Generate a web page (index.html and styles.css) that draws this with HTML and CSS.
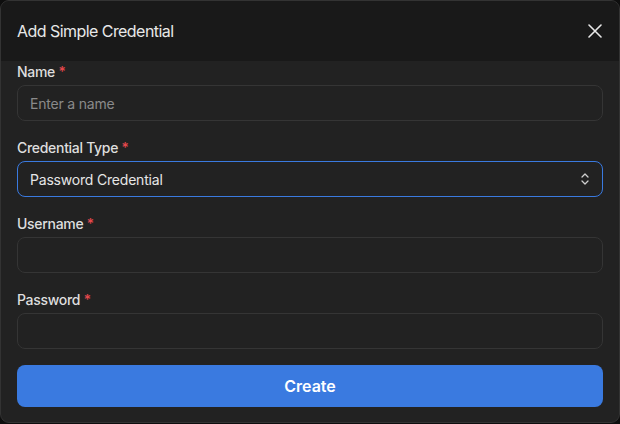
FILE: index.html
```html
<!DOCTYPE html>
<html lang="en">
<head>
  <meta charset="UTF-8">
  <title>Add Simple Credential</title>
  <link rel="stylesheet" href="styles.css">
</head>
<body>
  <div class="dialog">
    <div class="header">
      <h2>Add Simple Credential</h2>
      <button class="close" aria-label="Close">
        <svg width="14" height="14" viewBox="0 0 14 14"><path d="M1 1L13 13M13 1L1 13" stroke="#e8e8e8" stroke-width="1.6" stroke-linecap="round"/></svg>
      </button>
    </div>

    <form class="body">
      <div class="field">
        <label>Name <span class="req">*</span></label>
        <input type="text" placeholder="Enter a name">
      </div>

      <div class="field">
        <label>Credential Type <span class="req">*</span></label>
        <div class="select focused">
          <span>Password Credential</span>
          <svg width="12" height="14" viewBox="0 0 12 14"><path d="M3 5L6 2L9 5M3 9L6 12L9 9" fill="none" stroke="#cfcfcf" stroke-width="1.3" stroke-linecap="round" stroke-linejoin="round"/></svg>
        </div>
      </div>

      <div class="field">
        <label>Username <span class="req">*</span></label>
        <input type="text">
      </div>

      <div class="field">
        <label>Password <span class="req">*</span></label>
        <input type="password">
      </div>

      <button type="button" class="create">Create</button>
    </form>
  </div>
</body>
</html>
```

FILE: styles.css
```css
body {
  margin: 0;
  background: #0e0e0e;
  font-family: Inter, "Noto Sans", sans-serif;
  color: #e6e6e6;
}
.dialog {
  width: 620px;
  height: 423px;
  box-sizing: border-box;
  border: 1px solid #333;
  border-radius: 9px;
  background: #222;
  overflow: hidden;
}
.header {
  height: 60px;
  background: #191919;
  display: flex;
  align-items: center;
  justify-content: space-between;
  padding: 0 16px;
}
.header h2 {
  margin: 0 0 1px;
  font-size: 16px;
  font-weight: 400;
  color: #e8e8e8;
  letter-spacing: -0.55px;
}
.close {
  background: none;
  border: none;
  padding: 0;
  width: 20px;
  height: 20px;
  display: flex;
  align-items: center;
  justify-content: center;
  margin-right: -2px;
  cursor: pointer;
}
.body {
  padding: 1px 16px 0;
  display: flex;
  flex-direction: column;
}
.field {
  display: flex;
  flex-direction: column;
  margin-bottom: 17px;
}
.field label {
  font-size: 14px;
  line-height: 20px;
  font-weight: 500;
  color: #dedede;
  margin-bottom: 3px;
  letter-spacing: -0.3px;
}
.req {
  color: #e5484d;
}
.field input,
.select {
  height: 36px;
  box-sizing: border-box;
  background: #222;
  border: 1px solid #353535;
  border-radius: 8px;
  padding: 0 12px;
  font-family: inherit;
  font-size: 14px;
  color: #e6e6e6;
  letter-spacing: -0.2px;
  outline: none;
}
.field input::placeholder {
  color: #8a8a8a;
}
.select {
  display: flex;
  align-items: center;
  justify-content: space-between;
}
.select.focused {
  border: 1.5px solid #3a7ae0;
}
.select svg {
  margin-right: -1px;
}
.create {
  margin-top: -1px;
  height: 42px;
  border: none;
  border-radius: 8px;
  background: #3a7ae0;
  color: #fff;
  font-family: inherit;
  font-size: 16px;
  font-weight: 600;
  cursor: pointer;
}
```
